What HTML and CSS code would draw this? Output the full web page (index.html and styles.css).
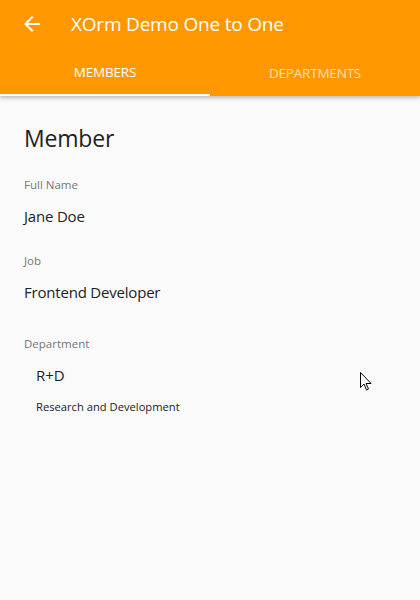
FILE: index.html
```html
<!DOCTYPE html>
<html>
<head>
<meta charset="utf-8">
<link rel="stylesheet" href="styles.css">
</head>
<body>
<header class="appbar">
  <div class="toolbar">
    <svg class="back" width="24" height="24" viewBox="0 0 24 24"><path d="M20 11H7.83l5.59-5.59L12 4l-8 8 8 8 1.41-1.41L7.83 13H20v-2z" fill="#fff"/></svg>
    <span class="title">XOrm Demo One to One</span>
  </div>
  <nav class="tabs">
    <div class="tab active">MEMBERS</div>
    <div class="tab">DEPARTMENTS</div>
  </nav>
</header>
<main class="content">
  <h1 class="heading">Member</h1>
  <div class="field">
    <div class="label">Full Name</div>
    <div class="value">Jane Doe</div>
  </div>
  <div class="field">
    <div class="label">Job</div>
    <div class="value">Frontend Developer</div>
  </div>
  <div class="field field-dept">
    <div class="label">Department</div>
    <div class="dept">
      <div class="dept-name">R+D</div>
      <div class="dept-desc">Research and Development</div>
    </div>
  </div>
</main>
<svg class="cursor" width="12" height="20" viewBox="0 0 12 20"><path d="M0.5 0.5 L0.5 15.5 L4 12 L6.5 18 L8.5 17 L6 11.5 L11 11.5 Z" fill="#fff" stroke="#000" stroke-width="1"/></svg>
</body>
</html>
```
FILE: styles.css
```css
html, body {
  margin: 0;
  padding: 0;
}
body {
  width: 420px;
  height: 600px;
  background: #fafafa;
  font-family: "Open Sans", "Noto Sans", sans-serif;
  position: relative;
  overflow: hidden;
}
.appbar {
  background: #ff9800;
  box-shadow: 0 2px 4px rgba(0,0,0,0.25);
  position: relative;
}
.toolbar {
  height: 48px;
  display: flex;
  align-items: center;
  padding-left: 20px;
}
.back {
  display: block;
}
.title {
  color: #fff;
  font-size: 19px;
  margin-left: 27px;
  letter-spacing: -0.2px;
}
.tabs {
  display: flex;
  height: 48px;
}
.tab {
  flex: 1;
  display: flex;
  align-items: center;
  justify-content: center;
  color: rgba(255,255,255,0.7);
  font-size: 13.5px;
  letter-spacing: -0.2px;
  box-sizing: border-box;
  padding-top: 2px;
}
.tab.active {
  color: #fff;
  border-bottom: 2px solid #fff;
}
.content {
  padding: 24px 24px 0 24px;
}
.heading {
  margin: 0;
  font-weight: normal;
  font-size: 23px;
  color: #222;
  line-height: 36px;
  letter-spacing: -0.2px;
}
.field {
  margin-top: 21px;
}
.field + .field {
  margin-top: 25px;
}
.field + .field-dept {
  margin-top: 32px;
}
.label {
  font-size: 11.5px;
  color: #777;
  line-height: 16px;
}
.value {
  font-size: 15px;
  color: #222;
  line-height: 24px;
  margin-top: 11px;
  letter-spacing: -0.2px;
}
.dept {
  padding-left: 12px;
  margin-top: 11px;
}
.dept-name {
  font-size: 15px;
  color: #222;
  line-height: 24px;
}
.dept-desc {
  font-size: 11.2px;
  color: #222;
  line-height: 16px;
  margin-top: 12px;
}
.cursor {
  position: absolute;
  left: 360px;
  top: 372px;
}
```
